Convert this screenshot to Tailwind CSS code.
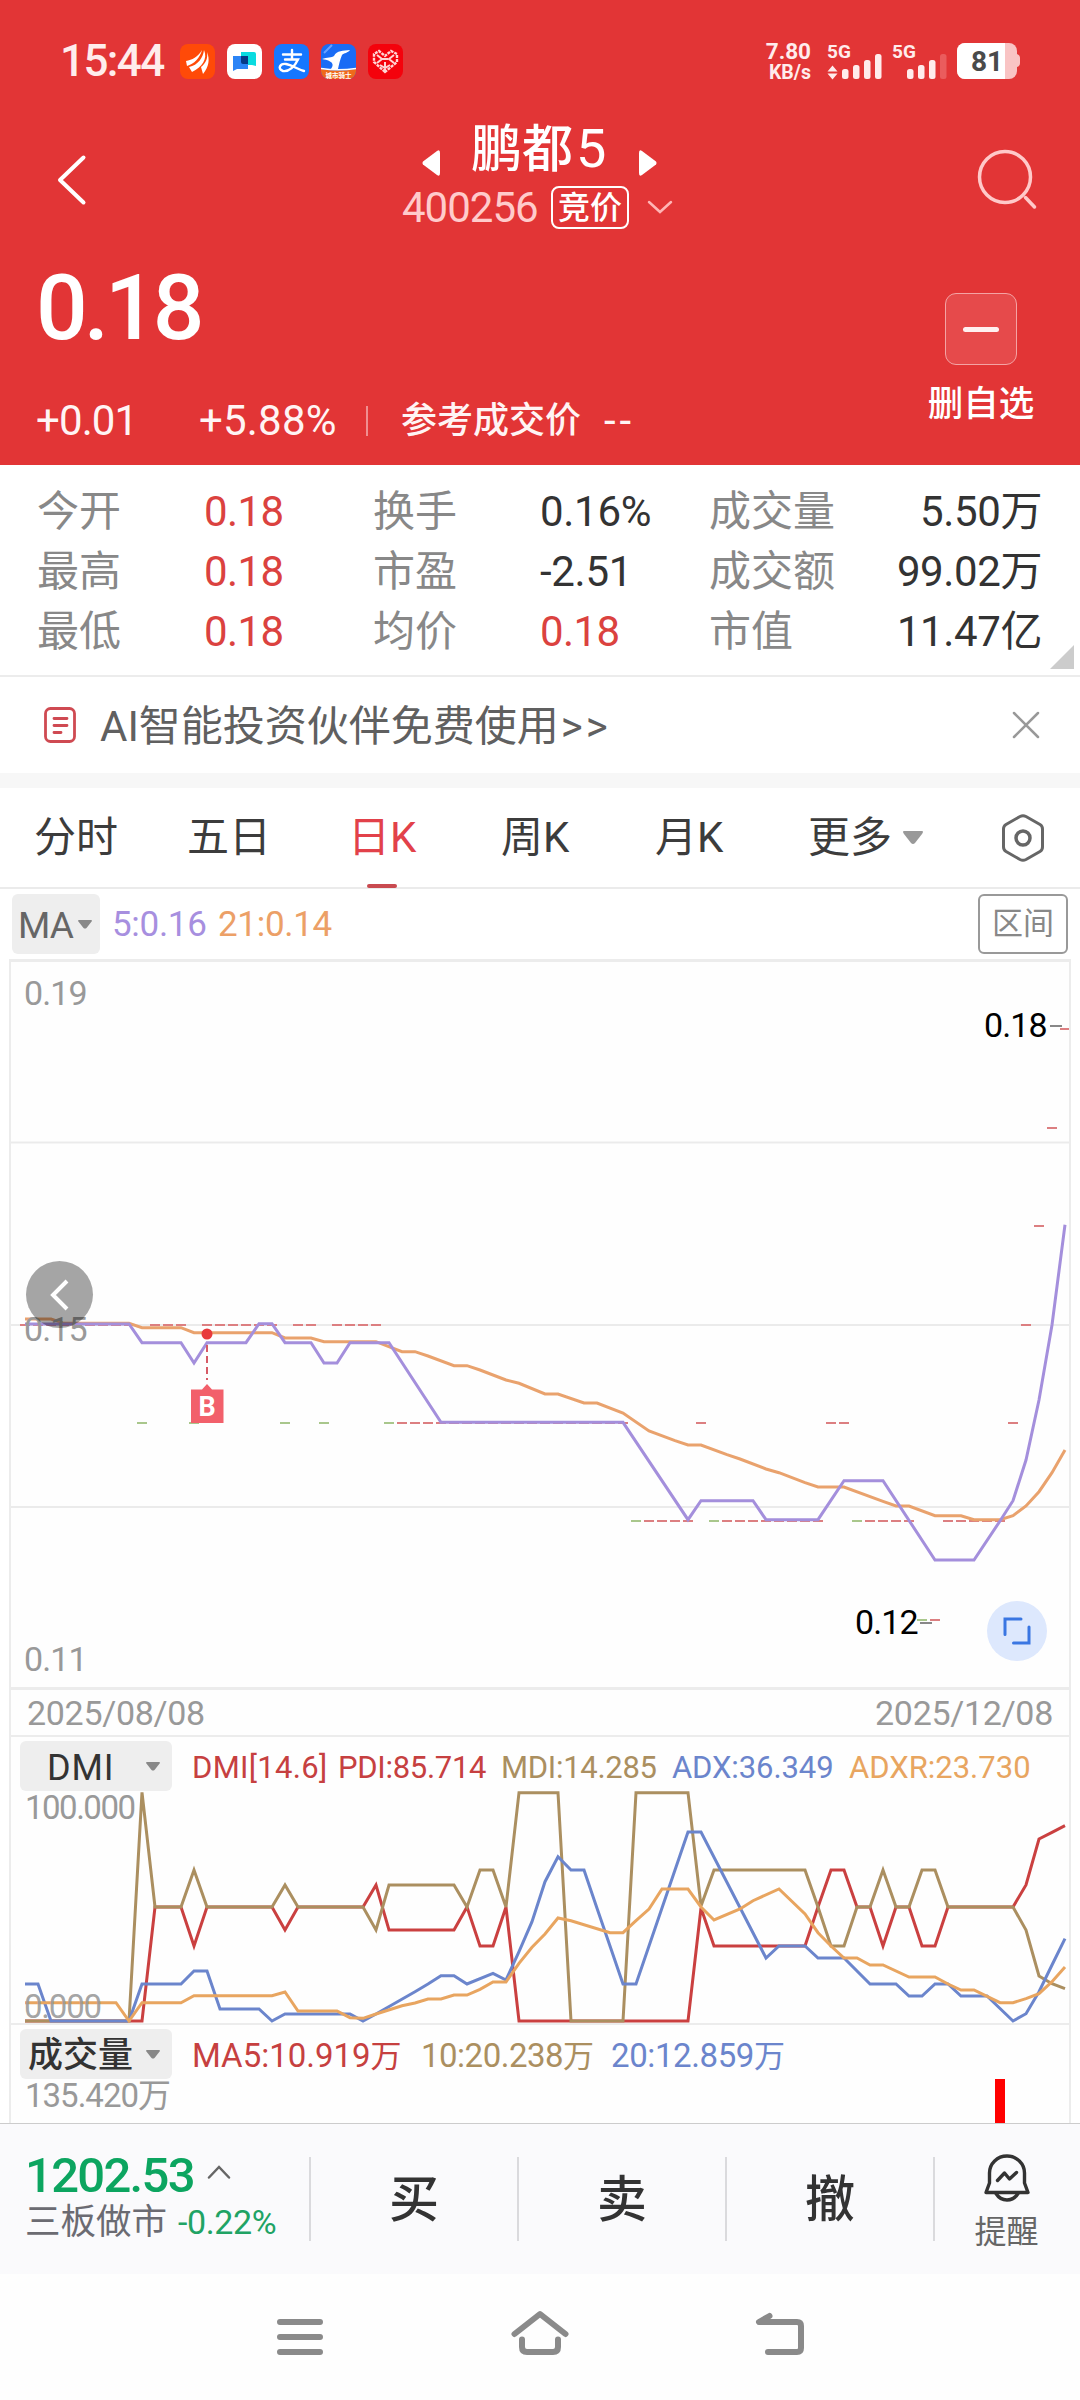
<!DOCTYPE html>
<html lang="zh-CN">
<head>
<meta charset="utf-8">
<title>鹏都5 400256</title>
<script src="https://cdn.jsdelivr.net/npm/@tailwindcss/browser@4"></script>
</head>
<body class="w-[1080px] h-[2400px] overflow-hidden bg-white font-['Roboto','Noto_Sans_CJK_SC',sans-serif] whitespace-nowrap">
<header class="h-[465px] bg-[#e23536] text-white">
  <!-- status bar -->
  <div class="h-[122px] flex items-center pl-[60px] pr-[60px] justify-between">
    <div class="flex items-center gap-[12px]">
      <span class="w-[108px] text-[44px] leading-[60px] font-medium tracking-[-1.6px] text-[#ffecec]">15:44</span>
      <svg width="35" height="35" viewBox="0 0 35 35"><rect width="35" height="35" rx="8" fill="#ff4a08"/><path d="M6 17C12 16 18 13 22 6C20 14 14 20 7 22ZM9 23C18 21 23 14 24 6C28 15 22 23 12 28ZM21 23C26 19 28 14 27 8C30 15 29 23 23 30Z" fill="#fff"/></svg>
      <svg width="35" height="35" viewBox="0 0 35 35"><rect width="35" height="35" rx="8" fill="#fff"/><path d="M14 8h13a2 2 0 0 1 2 2v12l-4-1H14z" fill="#09dbe0"/><path d="M6 12h15v13H10l-4 2z" fill="#2b84f6"/><path d="M14 12h7v8h-5a2 2 0 0 1-2-2z" fill="#063a86"/></svg>
      <svg width="35" height="35" viewBox="0 0 35 35"><rect width="35" height="35" rx="8" fill="#1677ff"/><g fill="none" stroke="#fff" stroke-width="2.400" stroke-linecap="round"><path d="M9 10.500h18M18 6v9M11 15.500h13C21 22 15 28 9 27C3 25 6 19 12 20C18 21 23 25 30 27"/></g></svg>
      <svg width="35" height="35" viewBox="0 0 35 35"><defs><clipPath id="app4"><rect width="35" height="35" rx="8"/></clipPath></defs><g clip-path="url(#app4)"><rect width="35" height="35" fill="#1a6cf5"/><path d="M3 9L11 1" stroke="#6aa2ff" stroke-width="2"/><path d="M1 15C6 13 11 14 13 12C16 6 22 7 29 6C27 9 23 9 21 11C19 16 18 20 17 25L10 25C13 21 13 17 1 15Z" fill="#fff"/><path d="M0 25Q17 28 35 25V35H0Z" fill="#ef6a1b"/><path d="M0 24.500Q17 27 35 24.500" stroke="#fff" stroke-width="1.500" fill="none"/></g><text x="17.500" y="33.500" font-size="6.500" font-weight="700" fill="#fff" text-anchor="middle">城市骑士</text></svg>
      <svg width="35" height="35" viewBox="0 0 35 35"><rect width="35" height="35" rx="8" fill="#f4020c"/><path d="M17 28L6 18V10L11 7L17 12L23 7L29 10V18Z" fill="none" stroke="#ffd5d5" stroke-width="2.400" stroke-dasharray="3 1"/><path d="M9 11l5 4-5 4M26 11l-5 4 5 4M12 21l5 3 5-3M17 18v9M14 15h6" stroke="#ffd5d5" stroke-width="2" fill="none"/></svg>
    </div>
    <svg width="255" height="44" viewBox="765 39 255 44" font-weight="700" fill="#ffecec">
      <text x="811" y="59" font-size="22.500" text-anchor="end">7.80</text>
      <text x="811" y="78.500" font-size="19.500" text-anchor="end">KB/s</text>
      <text x="827" y="57.500" font-size="19">5G</text>
      <path d="M832.500 65.500l5 6h-10zM832.500 79.500l5-6h-10z"/>
      <rect x="842" y="69" width="6.500" height="10" rx="2.500"/><rect x="853" y="65" width="6.500" height="14" rx="2.500"/><rect x="864" y="60" width="6.500" height="19" rx="2.500"/><rect x="875" y="54" width="6.500" height="25" rx="2.500"/>
      <text x="892" y="57.500" font-size="19">5G</text>
      <rect x="907" y="69" width="6.500" height="10" rx="2.500"/><rect x="918" y="65" width="6.500" height="14" rx="2.500"/><rect x="929" y="60" width="6.500" height="19" rx="2.500"/><rect x="940" y="54" width="6.500" height="25" rx="2.500" fill="#ea5c5d"/>
      <rect x="957" y="43" width="60" height="36" rx="8" fill="#f9c4c4"/><path d="M1017 54q3 1 3 4v5q0 3-3 4z" fill="#f9c4c4"/>
      <path d="M965 43h40v36h-40a8 8 0 0 1-8-8v-20a8 8 0 0 1 8-8z" fill="#fff"/>
      <text x="987" y="71" font-size="28" text-anchor="middle" fill="#4a4a4a">81</text>
    </svg>
  </div>
  <!-- title -->
  <div class="h-[116px] flex items-center">
    <svg class="ml-[54px]" width="36" height="52" viewBox="0 0 36 52" fill="none" stroke="#fff" stroke-width="4" stroke-linecap="round" stroke-linejoin="round"><path d="M29.500 3.500L6 26L29.500 48.500"/></svg>
    <div class="ml-[310px] w-[280px] h-[116px] flex flex-col">
      <div class="h-[60px] flex items-center pl-[22px]">
        <svg class="mt-[22px]" width="18" height="26" viewBox="0 0 18 26"><path d="M1 11.500L15 1Q18 -1 18 3V23Q18 27 15 25L1 14.500Q0 13 1 11.500Z" fill="#fff"/></svg>
        <span class="ml-[31px] w-[136px] mt-[-5px] text-[51px] leading-[60px] font-medium">鹏都<span class="ml-[3px] text-[54px] font-normal">5</span></span>
        <svg class="ml-[32px] mt-[22px]" width="18" height="26" viewBox="0 0 18 26"><path d="M17 11.500L3 1Q0 -1 0 3V23Q0 27 3 25L17 14.500Q18 13 17 11.500Z" fill="#fff"/></svg>
      </div>
      <div class="h-[50px] flex items-center">
        <span class="ml-[2px] w-[149px] mt-[2px] text-[42px] leading-[50px] tracking-[-1px] text-[#ffcbcb]">400256</span>
        <span class="w-[78px] h-[43px] border-2 border-white rounded-[8px] text-[32px] leading-[40px] font-medium text-center">竞价</span>
        <svg class="ml-[18px]" width="26" height="14" viewBox="0 0 26 14" fill="none" stroke="#ffb5b5" stroke-width="2.500" stroke-linecap="round"><path d="M2 2L13 12L24 2"/></svg>
      </div>
    </div>
    <svg class="ml-[295px]" width="64" height="64" viewBox="0 0 64 64" fill="none" stroke="#ffc9c9" stroke-width="3.500" stroke-linecap="round"><circle cx="30" cy="29" r="25.500"/><path d="M50.500 49.500L59.500 59"/></svg>
  </div>
  <!-- price -->
  <div class="h-[227px] flex justify-between pl-[36px] pr-[46px]">
    <div>
      <div class="pt-[20px] h-[152px]"><span class="text-[91px] leading-[100px] font-medium tracking-[-4px]">0.18</span></div>
      <div class="h-[62px] flex items-center text-[#fff4f4]">
        <span class="w-[163px] text-[42px] tracking-[-0.9px] leading-[60px]">+0.01</span>
        <span class="w-[167px] text-[42px] tracking-[0.2px] leading-[60px]">+5.88%</span>
        <span class="w-[2px] h-[30px] bg-[#f08f90]"></span>
        <span class="ml-[33px] w-[203px] text-[36px] leading-[60px] font-medium">参考成交价</span>
        <span class="text-[42px] leading-[60px] tracking-[4px]">--</span>
      </div>
    </div>
    <div class="w-[106px] pt-[55px] flex flex-col items-center">
      <div class="w-[72px] h-[72px] rounded-[11px] border border-[#f4a3a4] bg-[#e64a4b] flex items-center justify-center"><span class="w-[36px] h-[5px] rounded-full bg-[#fff0f0]"></span></div>
      <span class="mt-[13px] text-[35.500px] leading-[52px] font-medium">删自选</span>
    </div>
  </div>
</header>

<!-- quote summary -->
<section class="relative h-[212px] pt-[17px] pl-[37px] border-b-2 border-[#ececec] text-[42px] leading-[60px] grid grid-cols-[167px_169px_167px_169px_133px_200px] grid-rows-[60px_60px_60px] text-[#888]">
  <span>今开</span><span class="tracking-[-0.6px] text-[#db423f]">0.18</span><span>换手</span><span class="tracking-[-0.3px] text-[#333]">0.16%</span><span>成交量</span><span class="text-right text-[#333] tracking-[-0.4px]">5.50万</span>
  <span>最高</span><span class="tracking-[-0.6px] text-[#db423f]">0.18</span><span>市盈</span><span class="tracking-[-0.3px] text-[#333]">-2.51</span><span>成交额</span><span class="text-right text-[#333] tracking-[-0.4px]">99.02万</span>
  <span>最低</span><span class="tracking-[-0.6px] text-[#db423f]">0.18</span><span>均价</span><span class="tracking-[-0.6px] text-[#db423f]">0.18</span><span>市值</span><span class="text-right text-[#333] tracking-[-0.4px]">11.47亿</span>
  <svg class="absolute right-[6px] bottom-[6px]" width="24" height="24" viewBox="0 0 24 24"><path d="M24 0V24H0Z" fill="#ccc"/></svg>
</section>

<!-- banner -->
<section class="h-[96px] flex items-center pl-[44px] pr-[40px]">
  <svg width="32" height="36" viewBox="0 0 32 36" fill="none" stroke="#cf4a52" stroke-width="2.800" stroke-linecap="round"><rect x="1.500" y="1.500" width="29" height="33" rx="5"/><path d="M10 11.500h13M10 18.500h13M10 25.500h7"/></svg>
  <span class="ml-[24px] mt-[3px] text-[42px] leading-[60px] text-[#606060]">AI智能投资伙伴免费使用<span class="ml-[2px] tracking-[3px]">&gt;&gt;</span></span>
  <svg class="ml-auto" width="28" height="28" viewBox="0 0 28 28" stroke="#999" stroke-width="2.500" stroke-linecap="round"><path d="M2 2L26 26M26 2L2 26"/></svg>
</section>
<div class="h-[15px] bg-[#f7f7f7]"></div>

<!-- period tabs -->
<nav class="h-[101px] border-b-2 border-[#ebebeb] flex items-center pl-[34px] text-[42px] leading-[100px] text-[#3c3c3c]">
  <span class="w-[153px]">分时</span><span class="w-[161px]">五日</span>
  <span class="w-[153px] relative text-[#e2414a]">日K<i class="absolute left-[19px] bottom-0 w-[30px] h-[4px] rounded-full bg-[#c94a50]"></i></span>
  <span class="w-[154px]">周K</span><span class="w-[153px]">月K</span><span class="w-[95px]">更多</span>
  <svg width="20" height="14" viewBox="0 0 20 14"><path d="M1 0H19Q21 0 19 3L12 12Q10 14 8 12L1 3Q-1 0 1 0Z" fill="#999"/></svg>
  <svg class="ml-[78px]" width="44" height="48" viewBox="0 0 44 48" fill="none" stroke="#666" stroke-width="3"><path d="M19 2.500Q22 1 25 2.500L39 10.500Q41.500 12 41.500 15V33Q41.500 36 39 37.500L25 45.500Q22 47 19 45.500L5 37.500Q2.500 36 2.500 33V15Q2.500 12 5 10.500Z"/><circle cx="22" cy="24" r="7" stroke-width="3.500"/></svg>
</nav>

<!-- moving averages -->
<div class="h-[70px] flex items-center pl-[12px] pr-[12px] text-[35px]">
  <div class="w-[88px] h-[60px] rounded-[6px] bg-[#eee] flex items-center pl-[6px] text-[37px] text-[#666]"><span class="w-[60px] mt-[3px] tracking-[-0.8px]">MA</span><svg width="14" height="9" viewBox="0 0 14 9"><path d="M0 1Q0 0 1 0H13Q14 0 14 1L8.500 8Q7 9 5.500 8Z" fill="#888"/></svg></div>
  <span class="ml-[12px] w-[106px] mt-[2px] tracking-[-0.3px] text-[#a78fdf]">5:0.16</span>
  <span class="mt-[2px] tracking-[-0.3px] text-[#eca067]">21:0.14</span>
  <span class="ml-auto w-[90px] h-[60px] rounded-[6px] border-2 border-[#999] text-[31px] leading-[56px] text-center text-[#888]">区间</span>
</div>

<main class="mx-[9px] w-[1062px] h-[1164px] border-x-2 border-[#ececec] bg-[#fefefe] overflow-hidden">
  <!-- price chart -->
  <div class="relative h-[731px] border-t-3 border-b-3 border-[#ececec] text-[34px] leading-[40px] tracking-[-0.9px] text-[#999]">
    <div class="absolute left-0 top-0 w-[1058px] h-[725px]">
      <svg width="1058" height="725" viewBox="11 962 1058 725" fill="none" id="price">
        <path d="M11 1142.500H1069M11 1325H1069M11 1507H1069" stroke="#ebebeb" stroke-width="2"/>
        <path id="up" stroke="#dc7f81" stroke-width="2"/>
        <path id="down" stroke="#a9c78c" stroke-width="2"/>
        <path d="M920 1623H932M1050 1026H1062" stroke="#888" stroke-width="2"/>
        <polyline id="ma21" stroke="#e9a26d" stroke-width="3"/>
        <polyline id="ma5" stroke="#a48fdc" stroke-width="3"/>
        <circle cx="207" cy="1334" r="5.500" fill="#e83a3c"/>
        <path d="M207 1345V1380" stroke="#d65a66" stroke-width="2" stroke-dasharray="7 4"/>
        <path d="M191 1389.500H202L207 1384L212 1389.500H223.500V1423H191Z" fill="#f2606b"/>
        <text x="207" y="1415.500" font-size="27" font-weight="700" fill="#fff" text-anchor="middle" letter-spacing="0">B</text>
      </svg>
    </div>
    <span class="absolute left-[13px] top-[11px]">0.19</span>
    <span class="absolute left-[13px] top-[347px]">0.15</span>
    <span class="absolute left-[13px] top-[677px]">0.11</span>
    <span class="absolute left-[973px] top-[43px] text-black">0.18</span>
    <span class="absolute left-[844px] top-[640px] text-black">0.12</span>
    <div class="absolute left-[15px] top-[299px] w-[67px] h-[67px] rounded-full bg-black/35 flex items-center justify-center"><svg width="20" height="32" viewBox="0 0 20 32" fill="none" stroke="#fff" stroke-width="4"><path d="M17 2L3 16L17 30"/></svg></div>
    <div class="absolute left-[976px] top-[639px] w-[60px] h-[60px] rounded-full bg-[#dde8fd] flex items-center justify-center"><svg width="28" height="28" viewBox="0 0 28 28" fill="none" stroke="#3a76e2" stroke-width="3" stroke-linecap="round"><path d="M18 2H2V17.500M26 10V26H10.500"/></svg></div>
  </div>
  <!-- date range -->
  <div class="h-[47px] pt-[2px] border-b-2 border-[#ececec] flex justify-between items-center pl-[16px] pr-[16px] text-[34px] tracking-[-0.3px] text-[#999]"><span>2025/08/08</span><span>2025/12/08</span></div>
  <!-- DMI -->
  <div class="relative h-[288px] border-b-2 border-[#ececec]">
    <svg class="absolute left-0 top-0" width="1058" height="286" viewBox="11 1737 1058 286" fill="none" stroke-width="3">
      <polyline id="pdi" stroke="#ca4040"/><polyline id="mdi" stroke="#ab8f60"/><polyline id="adx" stroke="#6b85cc"/><polyline id="adxr" stroke="#e8a560"/>
    </svg>
    <div class="pt-[4px] h-[54px] flex items-center text-[31px] leading-[46px]">
      <div class="ml-[9px] w-[152px] h-[50px] rounded-[6px] bg-[#eee] flex items-center text-[36px] text-[#333]"><span class="w-[126px] pl-[27px] mt-[4px] tracking-[0.8px]">DMI</span><svg width="14" height="9" viewBox="0 0 14 9"><path d="M0 1Q0 0 1 0H13Q14 0 14 1L8.500 8Q7 9 5.500 8Z" fill="#888"/></svg></div>
      <span class="ml-[20px] w-[146px] mt-[4px] tracking-[0.3px] text-[#c64040]">DMI[14.6]</span>
      <span class="w-[163px] mt-[4px] tracking-[-0.3px] text-[#c64040]">PDI:85.714</span>
      <span class="w-[171px] mt-[4px] tracking-[-0.3px] text-[#ab8f60]">MDI:14.285</span>
      <span class="w-[177px] mt-[4px] tracking-[-0.1px] text-[#6b85cc]">ADX:36.349</span>
      <span class="mt-[4px] text-[#e8a560]">ADXR:23.730</span>
    </div>
    <span class="absolute left-[14px] top-[51px] text-[33px] leading-[40px] tracking-[-1.5px] text-[#999]">100.000</span>
    <span class="absolute left-[13px] top-[250px] text-[33px] leading-[40px] tracking-[-1.2px] text-[#999]/90">0.000</span>
  </div>
  <!-- volume -->
  <div class="h-[98px] relative">
    <div class="pt-[4px] h-[54px] flex items-center text-[33px] leading-[46px]">
      <div class="ml-[9px] w-[152px] h-[50px] rounded-[6px] bg-[#eee] flex items-center text-[35px] text-[#333]"><span class="w-[126px] pl-[8px] mt-[4px] font-medium">成交量</span><svg width="14" height="9" viewBox="0 0 14 9"><path d="M0 1Q0 0 1 0H13Q14 0 14 1L8.500 8Q7 9 5.500 8Z" fill="#888"/></svg></div>
      <span class="ml-[20px] w-[229px] mt-[4px] text-[#c64040]">MA5:10.919<span class="text-[31px]">万</span></span>
      <span class="w-[190px] mt-[4px] tracking-[-0.5px] text-[#ab8f60]">10:20.238<span class="text-[31px]">万</span></span>
      <span class="mt-[4px] tracking-[-0.4px] text-[#6b85cc]">20:12.859<span class="text-[31px]">万</span></span>
    </div>
    <div class="pl-[14px] pt-px text-[33px] leading-[32px] tracking-[-1px] text-[#999]">135.420万</div>
    <i class="absolute left-[984px] top-[54px] w-[10px] h-[44px] bg-[#f00]"></i>
  </div>
</main>

<!-- trade bar -->
<footer class="h-[151px] border-t border-[#ccc] bg-[#fafafc] flex items-center">
  <div class="w-[309px] pl-[25px] h-[130px] pt-[14px]">
    <div class="h-[56px] flex items-center"><span class="w-[182px] text-[49px] leading-[56px] font-medium tracking-[-1.7px] text-[#0ca560]">1202.53</span><svg class="mt-[-8px]" width="24" height="14" viewBox="0 0 24 14" fill="none" stroke="#666" stroke-width="2.500" stroke-linecap="round"><path d="M2 12.500L12 2L22 12.500"/></svg></div>
    <div class="h-[36px] flex items-center"><span class="w-[153px] text-[35.500px] leading-[36px] text-[#6b6b72]">三板做市</span><span class="text-[34px] leading-[36px] tracking-[-0.4px] text-[#20a364]">-0.22%</span></div>
  </div>
  <div class="w-[208px] h-[84px] border-l-2 border-[#dadadd] text-center text-[50px] leading-[86px] font-medium text-[#333]">买</div>
  <div class="w-[208px] h-[84px] border-l-2 border-[#dadadd] text-center text-[50px] leading-[86px] font-medium text-[#333]">卖</div>
  <div class="w-[208px] h-[84px] border-l-2 border-[#dadadd] text-center text-[50px] leading-[86px] font-medium text-[#333]">撤</div>
  <div class="w-[145px] h-[84px] border-l-2 border-[#dadadd] flex flex-col items-center">
    <svg class="shrink-0 mt-[-3px]" width="46" height="48" viewBox="0 0 46 48" fill="none" stroke="#333" stroke-width="3.400" stroke-linecap="round" stroke-linejoin="round"><path d="M5.500 29V19A17.500 17 0 0 1 40.500 19V29L44 38.500H2Z"/><path d="M12 39.500Q16 46 23 46Q30 46 34 39.500M13.500 26.500L20.500 19L25.500 25L32.500 18.500"/></svg>
    <span class="mt-[8px] text-[32px] leading-[44px] text-[#666]">提醒</span>
  </div>
</footer>

<!-- system navigation -->
<div class="h-[126px] bg-[#fefefe] flex justify-center items-center pb-[6px]">
  <svg width="540" height="60" viewBox="270 2304 540 60" fill="none" stroke="#8a8a8a" stroke-width="6" stroke-linecap="round" stroke-linejoin="round">
    <path d="M280 2322H320M280 2337H320M280 2352H320"/>
    <path d="M514.500 2334L540 2314L565.500 2334M522 2339.500V2347Q522 2352 527 2352H553Q558 2352 558 2347V2339.500"/>
    <path d="M769.500 2316L759 2322H797Q801 2322 801 2326V2348Q801 2352 797 2352H768"/>
  </svg>
</div>

<script>
const X = i => 25 + 13 * i;
// Each entry is [bar index, y at three units per pixel]
function line(id, base, d) {
  document.getElementById(id).setAttribute('points', d.map(([i, y]) => X(i) + ',' + (base + y / 3).toFixed(1)).join(' '));
}
line('ma5', 1260, [[0,192],[8,192],[9,248],[12,248],[13,309],[14,248],[17,248],[18,191],[19,191],[20,248],[22,248],[23,309],[24,309],[25,248],[28,248],[32,487],[46,487],[51,779],[52,722],[56,722],[57,779],[61,779],[63,662],[66,662],[70,900],[73,900],[75,783],[76,722],[77,600],[78,420],[79,195],[80,-106]]);
line('ma21', 1260, [[0,177],[2,177],[3,190],[8,190],[9,203],[12,203],[13,218],[19,218],[20,234],[22,234],[23,245],[27,245],[29,275],[30,275],[31,288],[33,317],[34,317],[35,330],[37,360],[38,370],[40,402],[41,402],[43,429],[44,429],[46,459],[48,513],[50,542],[51,555],[52,555],[54,584],[55,597],[57,627],[58,638],[60,668],[61,681],[63,681],[66,724],[67,738],[68,738],[70,767],[72,767],[73,779],[75,779],[76,767],[77,738],[78,695],[79,638],[80,570]]);
line('mdi', 1710, [[0,933],[8,933],[9,247],[10,591],[12,591],[13,480],[14,591],[19,591],[20,525],[21,591],[26,591],[27,660],[28,525],[33,525],[34,591],[35,480],[36,480],[37,591],[38,248],[41,248],[42,933],[46,933],[47,248],[51,248],[52,588],[53,480],[60,480],[61,591],[62,708],[63,708],[64,591],[65,591],[66,480],[67,591],[68,591],[69,480],[70,480],[71,591],[76,591],[77,660],[78,798],[79,821],[80,836]]);
line('pdi', 1710, [[0,933],[9,933],[10,591],[12,591],[13,708],[14,591],[19,591],[20,660],[21,591],[26,591],[27,525],[28,660],[33,660],[34,591],[35,708],[36,708],[37,591],[38,933],[51,933],[52,594],[53,708],[60,708],[61,591],[62,480],[63,480],[64,591],[65,591],[66,708],[67,591],[68,591],[69,708],[70,708],[71,591],[76,591],[77,525],[78,387],[79,367],[80,347]]);
line('adx', 1710, [[0,822],[1,822],[2,933],[8,933],[9,822],[12,822],[13,783],[14,783],[15,897],[18,897],[19,933],[20,912],[25,912],[26,933],[27,912],[30,845],[31,822],[32,797],[33,797],[34,822],[36,790],[37,810],[38,725],[39,635],[40,515],[41,440],[42,480],[43,480],[44,595],[45,708],[46,822],[47,822],[51,366],[52,366],[57,744],[58,708],[60,708],[61,744],[63,744],[65,822],[67,822],[68,858],[69,858],[70,822],[71,822],[72,858],[74,858],[76,933],[77,911],[78,845],[79,765],[80,686]]);
line('adxr', 1710, [[0,878],[7,878],[8,933],[9,878],[12,878],[13,857],[19,857],[20,846],[21,903],[24,903],[25,923],[26,925],[27,912],[29,887],[30,879],[31,867],[32,867],[33,855],[34,855],[35,838],[36,816],[37,816],[38,760],[39,712],[40,672],[41,624],[42,632],[45,668],[46,668],[47,632],[48,597],[49,537],[51,537],[52,591],[53,630],[55,597],[56,572],[58,537],[60,612],[61,668],[62,708],[63,744],[64,744],[65,765],[66,765],[68,801],[70,801],[71,822],[72,840],[73,840],[75,878],[76,878],[77,866],[78,851],[79,815],[80,771]]);
// Flat candles: [first bar, last bar, y]
const dash = (id, runs) => {
  let d = '';
  for (const [a, b, y] of runs) for (let i = a; i <= b; i++) d += `M${X(i) - 5} ${y}h10`;
  document.getElementById(id).setAttribute('d', d);
};
dash('up', [[0,8,1325],[10,12,1325],[14,19,1325],[21,22,1325],[24,27,1325],[29,46,1423],[52,52,1423],[62,63,1423],[76,76,1423],[48,51,1521],[54,61,1521],[65,68,1521],[71,75,1521],[70,70,1620],[77,77,1325],[78,78,1226],[79,79,1128],[80,80,1029]]);
dash('down', [[9,9,1423],[13,13,1423],[20,20,1423],[23,23,1423],[28,28,1423],[47,47,1521],[53,53,1521],[64,64,1521],[69,69,1620]]);
</script>
</body>
</html>
